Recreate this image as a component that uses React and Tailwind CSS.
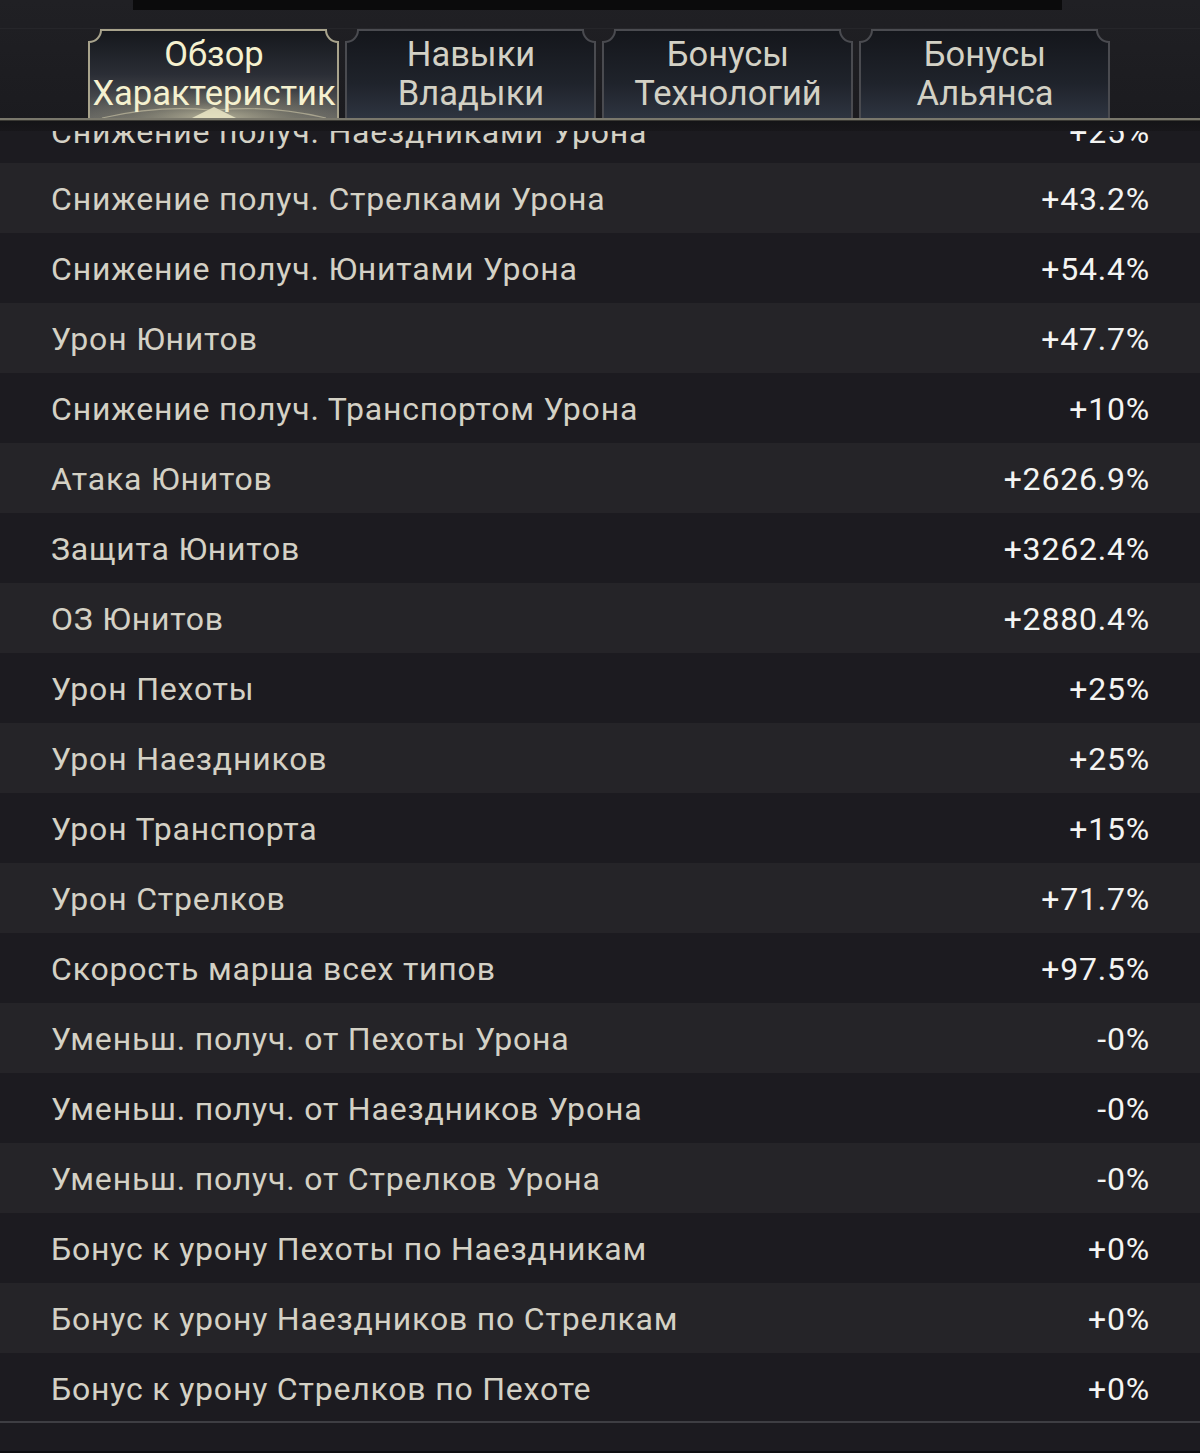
import React from "react";

const rows = [
  ["Снижение получ. Стрелками Урона", "+43.2%"],
  ["Снижение получ. Юнитами Урона", "+54.4%"],
  ["Урон Юнитов", "+47.7%"],
  ["Снижение получ. Транспортом Урона", "+10%"],
  ["Атака Юнитов", "+2626.9%"],
  ["Защита Юнитов", "+3262.4%"],
  ["ОЗ Юнитов", "+2880.4%"],
  ["Урон Пехоты", "+25%"],
  ["Урон Наездников", "+25%"],
  ["Урон Транспорта", "+15%"],
  ["Урон Стрелков", "+71.7%"],
  ["Скорость марша всех типов", "+97.5%"],
  ["Уменьш. получ. от Пехоты Урона", "-0%"],
  ["Уменьш. получ. от Наездников Урона", "-0%"],
  ["Уменьш. получ. от Стрелков Урона", "-0%"],
  ["Бонус к урону Пехоты по Наездникам", "+0%"],
  ["Бонус к урону Наездников по Стрелкам", "+0%"],
  ["Бонус к урону Стрелков по Пехоте", "+0%"],
];

const tabs = [
  ["Обзор", "Характеристик"],
  ["Навыки", "Владыки"],
  ["Бонусы", "Технологий"],
  ["Бонусы", "Альянса"],
];

function TabFrame({ active }) {
  const d =
    "M1 89 L1 13 A12 12 0 0 0 13 1 L238 1 A12 12 0 0 0 250 13 L250 89";
  return (
    <svg
      className="absolute inset-0 pointer-events-none"
      width="252"
      height="89"
      viewBox="0 0 252 89"
    >
      <defs>
        <linearGradient id={active ? "ga" : "gi"} x1="0" y1="0" x2="0" y2="1">
          {active ? (
            <>
              <stop offset="0" stopColor="#15171c" />
              <stop offset="0.5" stopColor="#2a2d35" />
              <stop offset="1" stopColor="#5e5f5e" />
            </>
          ) : (
            <>
              <stop offset="0" stopColor="#14161b" />
              <stop offset="0.6" stopColor="#1f232b" />
              <stop offset="1" stopColor="#2e3440" />
            </>
          )}
        </linearGradient>
        <radialGradient id="glow" cx="0.5" cy="1" r="0.65">
          <stop offset="0" stopColor="#f2ecc4" stopOpacity="0.6" />
          <stop offset="0.5" stopColor="#b8b18e" stopOpacity="0.25" />
          <stop offset="1" stopColor="#b8b18e" stopOpacity="0" />
        </radialGradient>
      </defs>
      <path d={d + " Z"} fill={active ? "url(#ga)" : "url(#gi)"} stroke="none" />
      {active && (
        <>
          <rect x="1" y="40" width="250" height="49" fill="url(#glow)" />
          <path d="M104 89 L126 78 L148 89 Z" fill="#ebe6c6" opacity="0.85" />
          <path d="M14 89 Q70 76 122 81" stroke="#d8d2b0" strokeWidth="1.2" fill="none" opacity="0.55" />
          <path d="M238 89 Q182 76 130 81" stroke="#d8d2b0" strokeWidth="1.2" fill="none" opacity="0.55" />
        </>
      )}
      <path d={d} fill="none" stroke={active ? "#a8a38c" : "#4a4b50"} strokeWidth="2" />
    </svg>
  );
}

function Row({ label, value, light, extra = "" }) {
  return (
    <div
      className={`h-[70px] shrink-0 flex items-center justify-between pl-[51px] pr-[50px] pt-[2px] ${
        light ? "bg-[#252428]" : "bg-[#1c1b20]"
      } ${extra}`}
    >
      <span className="text-[32px] text-[#d4d1c5] tracking-[0.8px]">{label}</span>
      <span className="text-[32px] text-[#f4f4f2] tracking-[0.8px]">{value}</span>
    </div>
  );
}

export default function App() {
  return (
    <div
      className="w-[1200px] h-[1453px] bg-[#1c1b20] flex flex-col overflow-hidden"
      style={{ fontFamily: "Roboto, 'Noto Sans', sans-serif" }}
    >
      {/* header */}
      <div className="h-[121px] shrink-0 flex flex-col bg-gradient-to-b from-[#202024] to-[#1b1b1f]">
        <div className="h-[10px] flex">
          <div className="ml-[133px] w-[929px] h-[10px] bg-[#0b0b0c]" />
        </div>
        <div className="h-[19px] border-b border-[#26262a]" />
        <div className="h-[89px] flex pl-[88px] gap-[5px]">
          {tabs.map((t, i) => (
            <div
              key={i}
              className="relative w-[252px] h-[89px] flex flex-col items-center justify-center"
            >
              <TabFrame active={i === 0} />
              <span
                className={`relative text-[34.5px] leading-[39px] ${
                  i === 0 ? "text-[#f5f1cf]" : "text-[#d3d1c5]"
                }`}
              >
                {t[0]}
              </span>
              <span
                className={`relative text-[34.5px] leading-[39px] whitespace-nowrap ${
                  i === 0 ? "text-[#f5f1cf]" : "text-[#d3d1c5]"
                }`}
              >
                {t[1]}
              </span>
            </div>
          ))}
        </div>
        <div className="h-[3px] bg-[#7a786c] border-b border-[#3a3934]" />
      </div>

      {/* list */}
      <div className="h-[1300px] shrink-0 flex flex-col">
        <div className="h-[10px] shrink-0 bg-gradient-to-b from-[#141417] to-[#18171b]" />
        <div className="h-[32px] shrink-0 overflow-hidden flex flex-col justify-end">
          <Row
            label="Снижение получ. Наездниками Урона"
            value="+25%"
            light={false}
            extra="mb-[-3px]"
          />
        </div>
        {rows.map((r, i) => (
          <Row key={i} label={r[0]} value={r[1]} light={i % 2 === 0} />
        ))}
      </div>
      <div className="h-[2px] shrink-0 bg-[#3e3e43]" />
      <div className="h-[28px] shrink-0 bg-[#1c1b20]" />
      <div className="h-[2px] shrink-0 bg-[#0e0e10]" />
    </div>
  );
}
